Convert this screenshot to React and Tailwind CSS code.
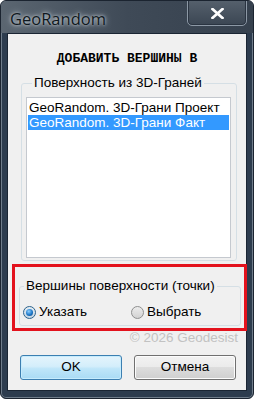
import React from 'react';

const ui = { fontFamily: '"Liberation Sans", Arial, sans-serif' };

function Radio({ checked, label }) {
  return (
    <label className="flex items-center gap-[3px] text-[13.5px] leading-[16px] text-black">
      {checked ? (
        <span className="flex h-[13px] w-[13px] items-center justify-center rounded-full border border-[#2c628b] bg-gradient-to-b from-[#e6eef4] to-[#c5d6e4]">
          <span className="h-[7px] w-[7px] rounded-full bg-[radial-gradient(circle_at_40%_35%,#8fd0ff_0%,#1e78c8_55%,#0b3f78_100%)]" />
        </span>
      ) : (
        <span className="h-[13px] w-[13px] rounded-full border border-[#8e8f8f] bg-gradient-to-b from-[#ececec] to-[#d2d2d2]" />
      )}
      <span>{label}</span>
    </label>
  );
}

export default function App() {
  return (
    <div className="h-[399px] w-[254px] overflow-hidden rounded-[6px] border border-[#1b2430] bg-[#2d3c4e] shadow-[inset_0_0_0_1px_#6f7c8a]" style={ui}>
      <div className="relative flex h-[32px] items-start bg-gradient-to-r from-[#5b6671] via-[#3f4a57] to-[#36414e]">
        <span
          className="ml-[9px] mt-[8px] text-[16.5px] leading-[20px] text-[#101820]"
          style={{ fontFamily: '"Open Sans", "Noto Sans", sans-serif', textShadow: '0 0 6px #c9d1d8, 0 0 3px #c9d1d8' }}
        >
          GeoRandom
        </span>
        <div className="absolute left-[186px] top-[-2px] flex h-[27px] w-[60px] items-center justify-center rounded-b-[5px] border border-[#8c98a5] bg-gradient-to-b from-[#56616d] to-[#3b4653] shadow-[inset_0_0_0_1px_#2a3441]">
          <svg width="13" height="11" viewBox="0 0 13 11" className="mt-[2px]">
            <path d="M1.5 1 L11.5 10 M11.5 1 L1.5 10" stroke="#ffffff" strokeWidth="2.6" strokeLinecap="square" />
          </svg>
        </div>
      </div>

      <div className="relative mx-[6px] h-[358px] border border-[#1a2533] bg-[#f0f0f0]">
        <div
          className="pt-[17px] text-center text-[13px] font-bold leading-[16px] text-black"
          style={{ fontFamily: '"Liberation Mono", "DejaVu Sans Mono", monospace' }}
        >
          ДОБАВИТЬ ВЕРШИНЫ В
        </div>

        <fieldset className="ml-[13px] mt-[8px] w-[216px] rounded-[3px] border border-[#d5dfe5] pb-[2px] pl-[4px]">
          <legend className="ml-[6px] px-[2px] text-[13.5px] leading-[16px] text-black">Поверхность из 3D-Граней</legend>
          <div className="mt-[6px] h-[161px] w-[205px] border border-[#c5c9cf] bg-white px-[1px] pt-[2px] text-[13.5px] text-black">
            <div className="h-[15px] pl-[1px] leading-[15px]">GeoRandom. 3D-Грани Проект</div>
            <div className="h-[15px] bg-[#3399ff] pl-[1px] leading-[15px] text-white">GeoRandom. 3D-Грани Факт</div>
          </div>
        </fieldset>

        <fieldset className="ml-[11px] mt-[17px] w-[222px] rounded-[3px] border border-[#d5dfe5] pb-[5px] pl-[3px]">
          <legend className="ml-[1px] px-[2px] text-[13.5px] leading-[16px] text-black">Вершины поверхности (точки)</legend>
          <div className="mt-[10px] flex">
            <div className="w-[108px]">
              <Radio checked label="Указать" />
            </div>
            <Radio label="Выбрать" />
          </div>
        </fieldset>

        <div className="absolute left-[4px] top-[230px] h-[67px] w-[235px] border-[3px] border-[#e3121d]" />

        <div className="mt-[4px] pr-[8px] text-right text-[13.5px] leading-[16px] text-[#c2c2c2]">© 2026 Geodesist</div>

        <div className="ml-[12px] mt-[9px] flex gap-[12px] text-[13.5px] text-black">
          <button className="flex h-[25px] w-[102px] items-center justify-center rounded-[3px] border border-[#3c7fb1] bg-[linear-gradient(to_bottom,#e4f4fc_0%,#d4eefb_45%,#bfe6f9_55%,#a9dbf5_100%)] shadow-[inset_0_0_0_1px_#c6ecfd]">
            OK
          </button>
          <button className="flex h-[25px] w-[102px] items-center justify-center rounded-[3px] border border-[#707070] bg-[linear-gradient(to_bottom,#f2f2f2_0%,#ebebeb_50%,#dddddd_50%,#cfcfcf_100%)] shadow-[inset_0_0_0_1px_#fcfcfc]">
            Отмена
          </button>
        </div>
      </div>
    </div>
  );
}
